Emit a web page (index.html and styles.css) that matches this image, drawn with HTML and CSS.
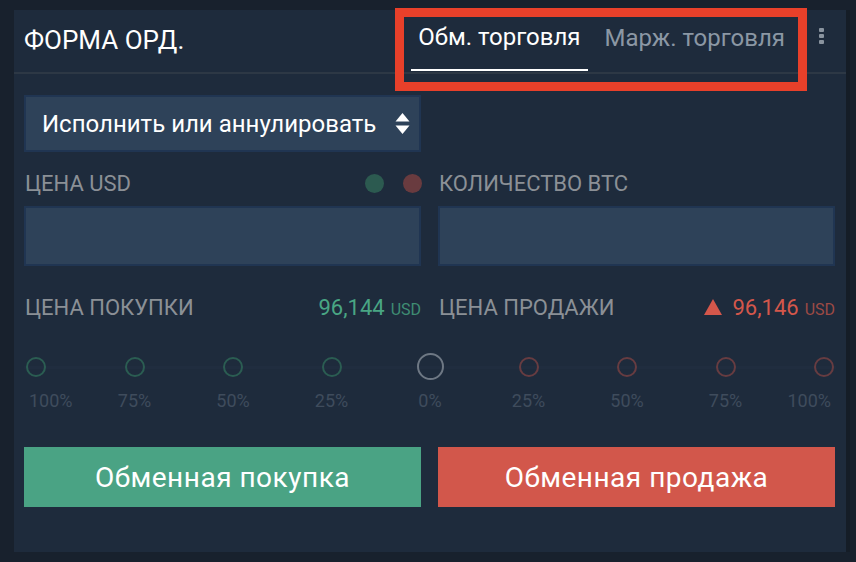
FILE: index.html
```html
<!DOCTYPE html>
<html lang="ru">

<head>
    <meta charset="UTF-8">
    <meta name="viewport" content="width=device-width, initial-scale=1.0">
    <title>Форма ордера</title>
    <link rel="stylesheet" href="styles.css">
</head>

<body>

    <div class="panel">
        <div class="panel-head">
            <h2 class="title">ФОРМА ОРД.</h2>
            <div class="tabs">
                <span class="tab active">Обм. торговля</span>
                <span class="tab">Марж. торговля</span>
            </div>
            <div class="kebab"><i></i><i></i><i></i></div>
            <div class="highlight"></div>
        </div>

        <div class="panel-body">
            <div class="row">
                <div class="select">
                    <span>Исполнить или аннулировать</span>
                    <svg class="updown" width="15" height="23" viewBox="0 0 15 23">
                        <path d="M7.5 1 L14.5 9.5 H0.5 Z" fill="#fff" />
                        <path d="M7.5 22 L14.5 13.5 H0.5 Z" fill="#fff" />
                    </svg>
                </div>
                <div></div>
            </div>

            <div class="row labels">
                <div class="label-line">
                    <span>ЦЕНА USD</span>
                    <span class="dots"><i class="dot buy"></i><i class="dot sell"></i></span>
                </div>
                <div class="label-line">
                    <span>КОЛИЧЕСТВО BTC</span>
                </div>
            </div>

            <div class="row">
                <div class="field"></div>
                <div class="field"></div>
            </div>

            <div class="row prices">
                <div class="label-line">
                    <span>ЦЕНА ПОКУПКИ</span>
                    <span class="price buy">96,144 <small>USD</small></span>
                </div>
                <div class="label-line">
                    <span>ЦЕНА ПРОДАЖИ</span>
                    <span class="price sell"><b class="arrow"></b>96,146 <small>USD</small></span>
                </div>
            </div>

            <div class="slider">
                <div class="stop buy"><i></i><span class="first">100%</span></div>
                <div class="stop buy"><i></i><span>75%</span></div>
                <div class="stop buy"><i></i><span>50%</span></div>
                <div class="stop buy"><i></i><span>25%</span></div>
                <div class="stop zero"><i></i><span>0%</span></div>
                <div class="stop sell"><i></i><span>25%</span></div>
                <div class="stop sell"><i></i><span>50%</span></div>
                <div class="stop sell"><i></i><span>75%</span></div>
                <div class="stop sell"><i></i><span class="last">100%</span></div>
            </div>

            <div class="row">
                <button class="btn buy">Обменная покупка</button>
                <button class="btn sell">Обменная продажа</button>
            </div>
        </div>
    </div>

</body>

</html>
```

FILE: styles.css
```css
body {
    font-family: Roboto, "Noto Sans", sans-serif;
    background-color: #18212d;
    color: white;
    margin: 0;
    padding: 10px 0 0 14px;
    height: 562px;
    box-sizing: border-box;
    overflow: hidden;
}

.panel {
    width: 832px;
    height: 542px;
    background-color: #1e2b3c;
    box-shadow: 4px 0 0 #151d27;
}

.panel-head {
    position: relative;
    height: 62px;
    border-bottom: 2px solid #2d3845;
    display: flex;
    align-items: center;
    padding: 0 10px;
}

.title {
    margin: 0;
    font-size: 26px;
    font-weight: 400;
    flex: 1;
    margin-top: -3px;
}

.tabs {
    display: flex;
    gap: 10px;
    height: 100%;
    margin-right: 27px;
}

.tab {
    display: flex;
    align-items: center;
    padding: 0 7px 5px;
    font-size: 24px;
    color: #8b97a4;
    border-bottom: 2px solid transparent;
    box-sizing: border-box;
    height: 62px;
}

.tab.active {
    color: #fff;
    border-bottom-color: #fff;
    height: 61px;
}

.kebab {
    display: flex;
    flex-direction: column;
    gap: 2px;
    margin-right: 12px;
    margin-top: -11px;
}

.kebab i {
    width: 5px;
    height: 4px;
    border-radius: 1px;
    background-color: #8a949f;
}

.highlight {
    position: absolute;
    left: 381px;
    top: -2px;
    width: 394px;
    height: 65px;
    border: 9px solid #e8402a;
}

.panel-body {
    padding: 21px 10px 0;
}

.row {
    display: grid;
    grid-template-columns: 397px 397px;
    column-gap: 17px;
}

.select {
    height: 57px;
    box-sizing: border-box;
    background-color: #2e4259;
    border: 2px solid #203552;
    display: flex;
    align-items: center;
    justify-content: space-between;
    padding: 0 9px 0 16px;
    font-size: 24px;
}

.updown {
    display: block;
}

.labels {
    height: 54px;
    box-sizing: border-box;
    padding-top: 8px;
    align-items: center;
}

.label-line {
    display: flex;
    justify-content: space-between;
    align-items: center;
    font-size: 22px;
    color: #8b9096;
    padding-left: 1px;
}

.dots {
    display: flex;
    gap: 19px;
    margin-right: -1px;
}

.dot {
    width: 19px;
    height: 19px;
    border-radius: 50%;
}

.dot.buy {
    background-color: #2c5a50;
}

.dot.sell {
    background-color: #693b3f;
}

.field {
    height: 60px;
    box-sizing: border-box;
    background-color: #2e4259;
    border: 2px solid #203552;
}

.prices {
    height: 82px;
    align-items: center;
}

.price {
    font-size: 22px;
    display: flex;
    align-items: baseline;
}

.price small {
    font-size: 16px;
    margin-left: 6px;
}

.price.buy {
    color: #49a684;
}

.price.buy small {
    color: #3f8d73;
}

.price.sell {
    color: #d4574b;
}

.price.sell small {
    color: #9c4a45;
}

.arrow {
    width: 0;
    height: 0;
    border-left: 9px solid transparent;
    border-right: 9px solid transparent;
    border-bottom: 16px solid #d4574b;
    margin-right: 10px;
    align-self: center;
}

.slider {
    display: flex;
    justify-content: space-between;
    height: 99px;
    padding-top: 5px;
    box-sizing: border-box;
    background: linear-gradient(#1e2b3c 18px, #202d3f 18px, #202d3f 21px, #1e2b3c 21px);
}

.stop {
    width: 24px;
    display: flex;
    flex-direction: column;
    align-items: center;
}

.stop i {
    width: 20px;
    height: 20px;
    margin: 3.5px 0;
    box-sizing: border-box;
    border-radius: 50%;
    border: 2px solid;
}

.stop.buy i {
    border-color: #2b5d52;
}

.stop.sell i {
    border-color: #673c41;
}

.stop.zero i {
    width: 27px;
    height: 27px;
    margin: 0;
    flex-shrink: 0;
    border-color: #6e7884;
}

.stop span {
    font-size: 18px;
    color: #3f4c5c;
    margin-top: 10px;
    white-space: nowrap;
}

.stop .first {
    align-self: flex-start;
    margin-left: 5px;
}

.stop .last {
    align-self: flex-end;
    margin-right: 5px;
}

.btn {
    height: 60px;
    border: none;
    font-family: Roboto, "Noto Sans", sans-serif;
    font-size: 28px;
    letter-spacing: 0.5px;
    color: #fff;
    cursor: pointer;
}

.btn.buy {
    background-color: #4aa384;
}

.btn.sell {
    background-color: #d2574b;
}
```
